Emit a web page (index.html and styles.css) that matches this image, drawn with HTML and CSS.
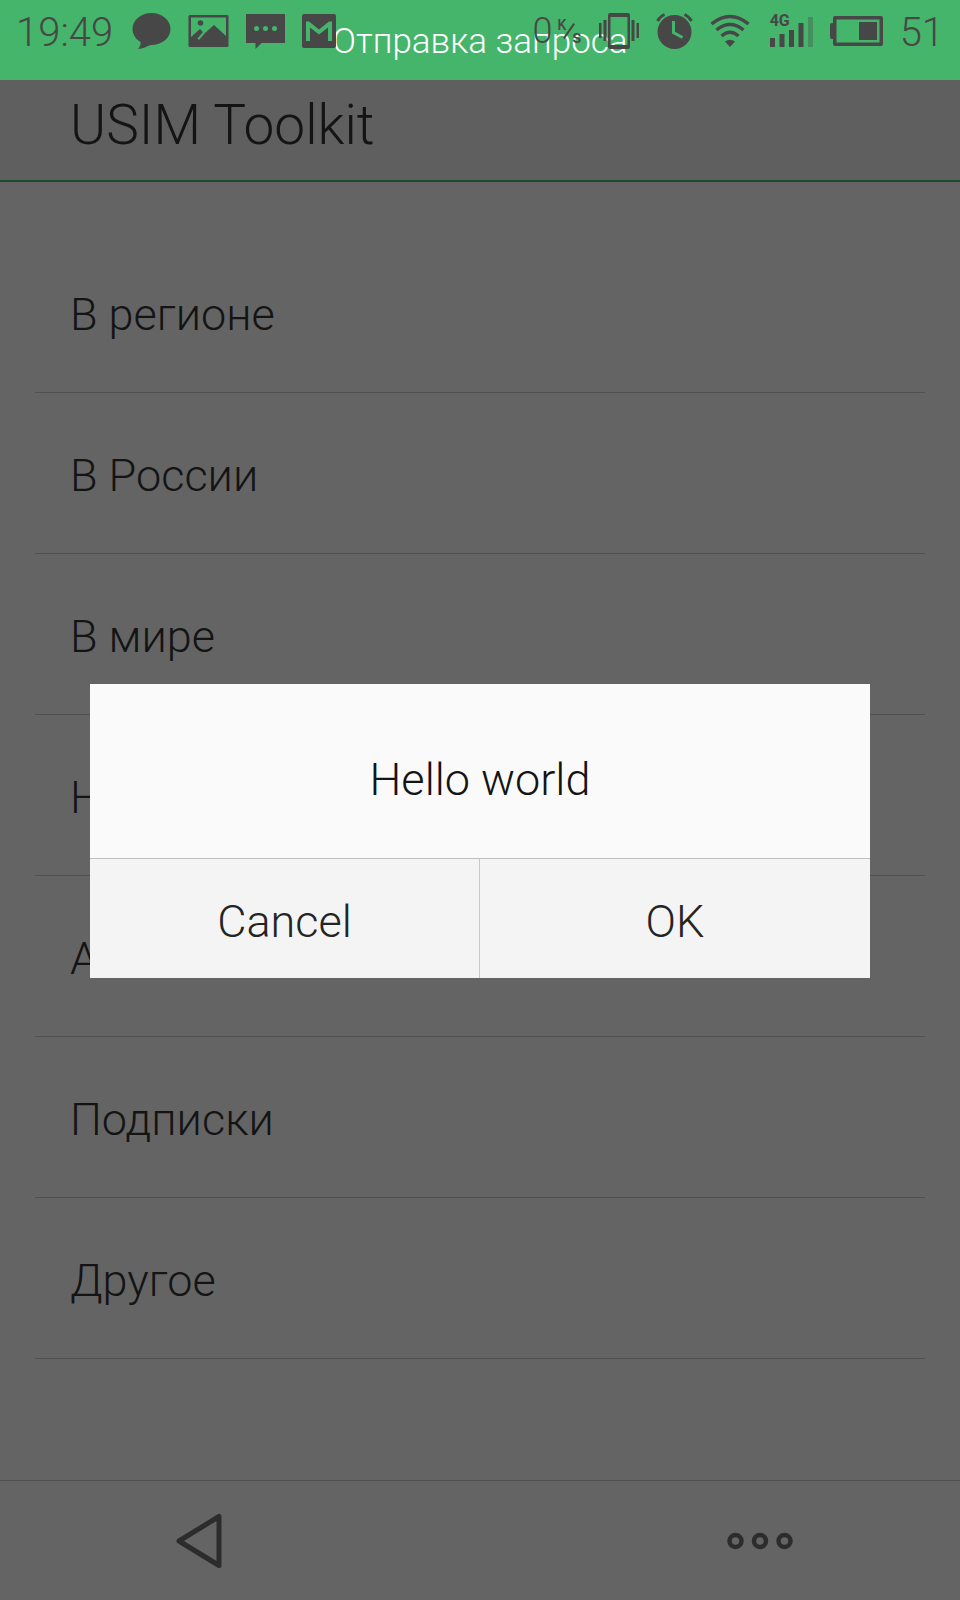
FILE: index.html
```
<!DOCTYPE html>
<html lang="ru">
<head>
  <meta charset="UTF-8">
  <meta name="viewport" content="width=device-width, initial-scale=1.0">
  <title>USIM Toolkit</title>
  <link rel="stylesheet" href="styles.css">
</head>
<body>
  <!-- Status bar -->
  <div class="status-bar">
    <div class="toast">Отправка запроса</div>
    <div class="status-row">
      <div class="status-left">
        <span class="clock">19:49</span>
        <svg width="39" height="38" viewBox="0 0 39 38">
          <path d="M19.500 1C30 1 38.500 8 38.500 17C38.500 26 30 33 19 33C15 34 11 37 6 37C8 35 9 32 8.500 30C3.500 27 .5 22 .5 17C.5 8 9 1 19.500 1Z"/>
        </svg>
        <svg width="41" height="34" viewBox="0 0 41 34">
          <rect x=".5" y="1" width="40" height="32" rx="1.500"/>
          <path class="cut" d="M3 3.500H38V22L26 11L17 19L11 26L9.500 24.500L15 18L12 15L3 23Z"/>
          <circle cx="12.500" cy="9" r="2.800"/>
        </svg>
        <svg width="39" height="36" viewBox="0 0 39 36">
          <path d="M0 1H39V30H15.500L9.500 36V30H0Z"/>
          <g class="cut">
            <circle cx="10.500" cy="15.500" r="2.500"/>
            <circle cx="19.500" cy="15.500" r="2.500"/>
            <circle cx="28.500" cy="15.500" r="2.500"/>
          </g>
        </svg>
        <svg width="34" height="34" viewBox="0 0 34 34">
          <rect width="34" height="34" rx="2"/>
          <path class="cut" d="M4 27V7.500H7L17 15.500L27 7.500H30V27H26V13.500L17 20.500L8 13.500V27Z"/>
        </svg>
      </div>
      <div class="status-right">
        <span class="speed">0</span>
        <span class="unit"><span>K</span><i></i><span>s</span></span>
        <svg width="40" height="36" viewBox="0 0 40 36">
          <path fill-rule="evenodd" d="M11 0H29Q31 0 31 2V34Q31 36 29 36H11Q9 36 9 34V2Q9 0 11 0ZM11.500 4V32H28.500V4Z"/>
          <path d="M0 10H2.500V25H0ZM4.500 7H7.500V28H4.500ZM32.500 7H35.500V28H32.500ZM37.500 10H40V25H37.500Z"/>
        </svg>
        <svg width="37" height="36" viewBox="0 0 37 36">
          <circle cx="18.500" cy="19" r="17"/>
          <path class="line" stroke-width="3" d="M1.500 8Q4 3.500 8.500 1.500M28.500 1.500Q33 3.500 35.500 8"/>
          <path class="line cut-line" stroke-width="3" d="M17.500 8V19.500L26.500 24.500"/>
        </svg>
        <svg width="40" height="34" viewBox="0 0 40 34">
          <path class="line" stroke-width="3.500" d="M1.500 10Q20 -5 38.500 10M6.500 16Q20 5 33.500 16M11.500 22Q20 14.500 28.500 22"/>
          <path d="M15 27.500Q20 24 25 27.500L20 33Z"/>
        </svg>
        <div class="signal">
          <span>4G</span>
          <svg width="43" height="34" viewBox="0 0 43 34">
            <path d="M0 24H5V33H0ZM9.500 20H14.500V33H9.500ZM19 16H24V33H19ZM28.500 9H33.500V33H28.500Z"/>
            <path opacity=".35" d="M38 3H43V33H38Z"/>
          </svg>
        </div>
        <svg width="53" height="30" viewBox="0 0 53 30">
          <path fill-rule="evenodd" d="M5 0H51Q53 0 53 2V28Q53 30 51 30H5Q3 30 3 28V23H2Q0 23 0 21V9Q0 7 2 7H3V2Q3 0 5 0ZM6.500 3.500V26.500H49.500V3.500Z"/>
          <rect x="29" y="6" width="18" height="18"/>
        </svg>
        <span class="clock">51</span>
      </div>
    </div>
  </div>

  <!-- Toolkit menu -->
  <header class="header">
    <h1>USIM Toolkit</h1>
  </header>
  <ul class="menu">
    <li>В регионе</li>
    <li>В России</li>
    <li>В мире</li>
    <li>Н</li>
    <li>А</li>
    <li>Подписки</li>
    <li>Другое</li>
  </ul>

  <!-- Bottom navigation -->
  <nav class="nav-bar">
    <button aria-label="Back">
      <svg width="46" height="56" viewBox="0 0 46 56">
        <path class="line" stroke-width="5" stroke-linejoin="round" d="M3 28L43 3.500V52.500Z"/>
      </svg>
    </button>
    <button aria-label="More">
      <svg width="66" height="18" viewBox="0 0 66 18">
        <g class="line" stroke-width="4.500">
          <circle cx="8.500" cy="9" r="6"/>
          <circle cx="33" cy="9" r="6"/>
          <circle cx="57.500" cy="9" r="6"/>
        </g>
      </svg>
    </button>
  </nav>

  <!-- Dialog -->
  <div class="overlay">
    <div class="dialog" role="dialog" aria-labelledby="dialogText">
      <p id="dialogText">Hello world</p>
      <div class="dialog-buttons">
        <button>Cancel</button>
        <button>OK</button>
      </div>
    </div>
  </div>
</body>
</html>
```
FILE: styles.css
```
:root {
  --green: #44b56b;
  --icon: #474747;
  --scrim: #646464;
}

* {
  box-sizing: border-box;
}

body {
  margin: 0;
  min-height: 100vh;
  display: flex;
  flex-direction: column;
  background: var(--scrim);
  color: #141414;
  font-family: Roboto, sans-serif;
  font-weight: 300;
}

svg {
  display: block;
  flex: none;
  fill: var(--icon);
}

.line {
  fill: none;
  stroke: var(--icon);
}

.cut {
  fill: var(--green);
}

.cut-line {
  stroke: var(--green);
}

button {
  border: 0;
  padding: 0;
  background: none;
  color: inherit;
  font: inherit;
  cursor: pointer;
}

/* Status bar */
.status-bar {
  position: relative;
  height: 80px;
  background: var(--green);
  color: var(--icon);
}

.toast {
  position: absolute;
  inset: 0;
  color: #fff;
  font-size: 35px;
  line-height: 84px;
  text-align: center;
}

.status-row {
  position: relative;
  height: 62px;
  padding: 0 16px;
  display: flex;
  align-items: center;
  justify-content: space-between;
}

.status-left,
.status-right {
  display: flex;
  align-items: center;
  gap: 17px;
}

.clock {
  padding-top: 4px;
  font-size: 40px;
  line-height: 58px;
}

.status-left .clock {
  margin-right: 2px;
}

.speed {
  font-size: 36px;
  line-height: 62px;
}

.unit {
  display: flex;
  margin-left: -12px;
  font-size: 14px;
  line-height: 14px;
  font-weight: 500;
}

.unit i {
  width: 2px;
  height: 18px;
  margin: 4px 2px 0;
  background: var(--icon);
  transform: rotate(35deg);
}

.unit span:last-child {
  margin-top: 12px;
  font-size: 18px;
}

.signal {
  position: relative;
  margin-left: 3px;
}

.signal span {
  position: absolute;
  top: -1px;
  left: 0;
  font-size: 16px;
  line-height: 16px;
  font-weight: 700;
}

/* Header */
.header {
  height: 102px;
  padding: 0 70px;
  border-bottom: 2px solid #1d4a2e;
  background: #5f5f5f;
}

h1 {
  margin: 0;
  font-size: 55px;
  line-height: 91px;
  font-weight: 300;
}

/* Menu */
.menu {
  flex: 1;
  margin: 0;
  padding: 50px 35px 0;
  list-style: none;
}

.menu li {
  padding: 5px 35px 0;
  border-bottom: 1px solid #505050;
  font-size: 45px;
  line-height: 155px;
}

/* Bottom navigation */
.nav-bar {
  height: 120px;
  padding: 0 167px 0 176px;
  border-top: 1px solid #505050;
  display: flex;
  align-items: center;
  justify-content: space-between;
}

.nav-bar .line {
  stroke: #2c2c2c;
}

/* Dialog */
.overlay {
  position: fixed;
  inset: 62px 0 0;
  padding: 0 90px;
  display: flex;
  align-items: center;
}

.dialog {
  width: 100%;
  background: #fafafa;
  font-size: 45px;
}

.dialog p {
  margin: 0;
  padding: 68px 20px 50px;
  line-height: 56px;
  text-align: center;
}

.dialog-buttons {
  display: grid;
  grid-template-columns: 1fr 1fr;
  border-top: 1px solid #bebebe;
  background: #f4f4f4;
  color: #242424;
}

.dialog-buttons button {
  height: 119px;
  padding-top: 5px;
}

.dialog-buttons button:first-child {
  border-right: 1px solid #c8c8c8;
}
```
